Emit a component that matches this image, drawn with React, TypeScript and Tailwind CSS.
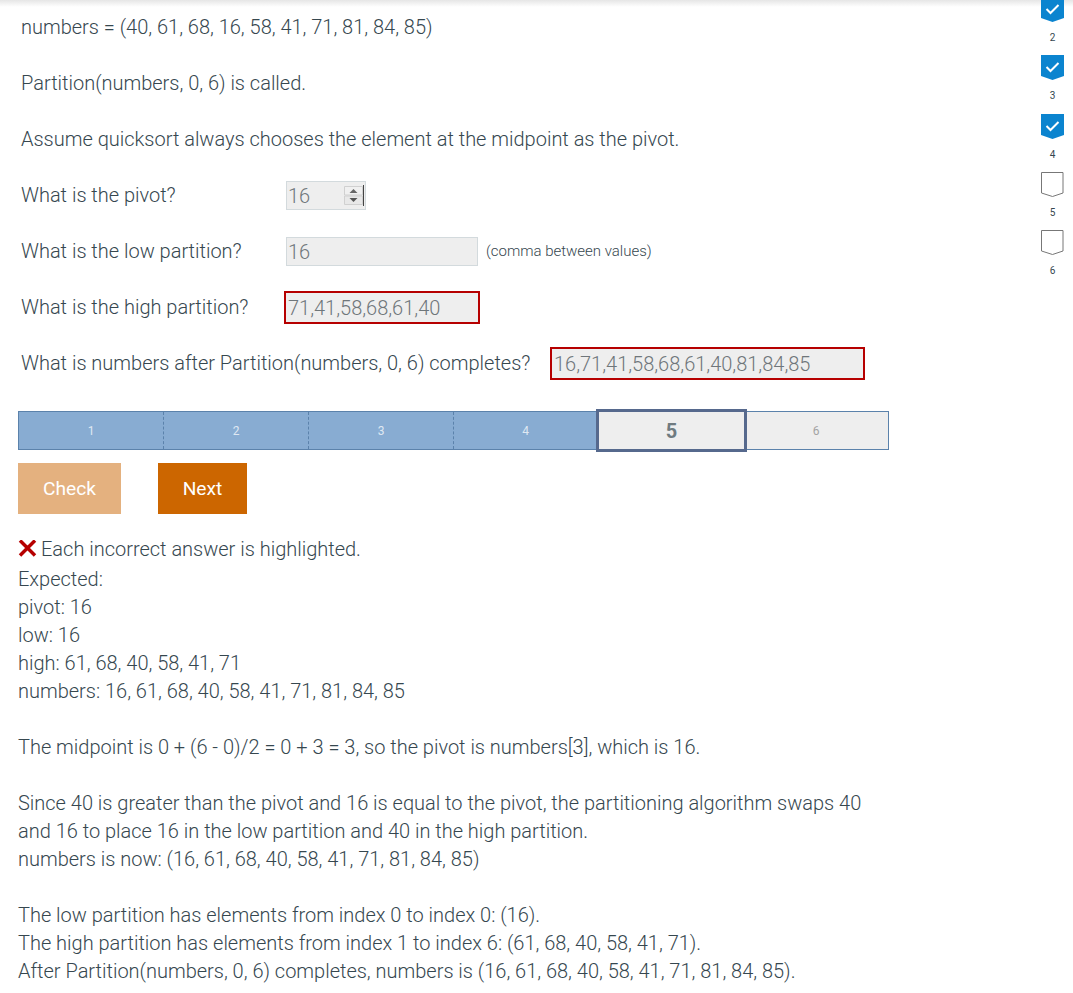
const labelClass = "shrink-0";

function Bookmark({ checked, n }: { checked: boolean; n: number }) {
  return (
    <div className="flex h-[58.25px] w-[23px] flex-col items-center">
      <svg width="23" height="26" viewBox="0 0 23 26" className="shrink-0">
        {checked ? (
          <>
            <path d="M0 0H23V21L11.5 25L0 21Z" fill="#0b84cf" />
            <path d="M5.5 12L9.5 16L17.5 8" fill="none" stroke="#fff" strokeWidth="2" />
          </>
        ) : (
          <path d="M0.5 0.5H22V21L11.5 24.5L0.5 21Z" fill="#fff" stroke="#777" strokeWidth="1" />
        )}
      </svg>
      <span className="mt-[8px] text-[10px] leading-[14px] font-normal text-[#36474f]">{n}</span>
    </div>
  );
}

function Field({ value, className }: { value: string; className: string }) {
  return (
    <input
      readOnly
      value={value}
      className={`box-border bg-[#eeeeee] text-[20px] font-light tracking-normal text-[#6f767a] outline-none ${className}`}
    />
  );
}

const steps = [1, 2, 3, 4];

export default function App() {
  return (
    <div className="relative flex h-[993px] w-[1073px] overflow-hidden bg-white font-['Roboto',sans-serif] text-[20px] leading-7 font-light tracking-[-0.01px] text-[#36474f]">
      <div className="absolute inset-x-0 top-0 h-[7px] bg-gradient-to-b from-[#e6e6e6] to-transparent" />

      <main className="w-[1041px] shrink-0 pt-[13px] pl-[18px]">
        <div className="flex flex-col gap-7 pl-[3px]">
          <p>numbers = (40, 61, 68, 16, 58, 41, 71, 81, 84, 85)</p>
          <p>Partition(numbers, 0, 6) is called.</p>
          <p>Assume quicksort always chooses the element at the midpoint as the pivot.</p>

          <div className="flex h-7 items-center">
            <span className={`${labelClass} w-[265px]`}>What is the pivot?</span>
            <div className="relative mt-[1px]">
              <Field value="16" className="block h-[29px] w-[80px] border border-[#d3dadd] pl-[1px]" />
              <div className="absolute top-[4px] left-[58px] h-[21px] w-[20px] border-r border-r-[#444]">
                <svg width="19" height="21" viewBox="0 0 19 21" className="block">
                  <path d="M0.5 1.5H18.5V10H0.5Z" fill="#f0f0f0" stroke="#d0d0d0" strokeWidth="1" />
                  <path d="M0.5 11H18.5V19.5H0.5Z" fill="#e8e8e8" stroke="#d0d0d0" strokeWidth="1" />
                  <path d="M5.5 8L9.5 4L13.5 8Z" fill="#666" />
                  <path d="M5.5 13L9.5 17L13.5 13Z" fill="#555" />
                </svg>
              </div>
            </div>
          </div>

          <div className="flex h-7 items-center">
            <span className={`${labelClass} w-[265px]`}>What is the low partition?</span>
            <Field value="16" className="mt-[1px] h-[29px] w-[192px] border border-[#d3dadd] pl-[1px]" />
            <span className="ml-2 text-[15px] font-light">(comma between values)</span>
          </div>

          <div className="flex h-7 items-center">
            <span className={`${labelClass} w-[263px]`}>What is the high partition?</span>
            <Field value="71,41,58,68,61,40" className="mt-[1px] h-[33px] w-[196px] border-2 border-[#b60000] pl-[2px]" />
          </div>

          <div className="flex h-7 items-center">
            <span className={`${labelClass} w-[529px]`}>What is numbers after Partition(numbers, 0, 6) completes?</span>
            <Field value="16,71,41,58,68,61,40,81,84,85" className="mt-[1px] h-[33px] w-[315px] border-2 border-[#b60000] pl-[2px]" />
          </div>
        </div>

        <div className="mt-[34px] flex h-[39px] w-[871px] items-stretch border border-[#5b82ab] bg-[#88acd2]">
          {steps.map((n) => (
            <div
              key={n}
              className={`flex items-center justify-center text-[12px] font-normal text-[#dfe8f2] ${n < 4 ? "w-[145px] border-r border-dashed border-r-[#5b82ab]" : "w-[143px]"}`}
            >
              {n}
            </div>
          ))}
          <div className="relative w-[291px] bg-[#eeeeee]">
            <div className="absolute top-[-3px] bottom-[-3px] left-[-1px] flex w-[151px] items-center justify-center border-[3px] border-[#56698d] bg-[#eeeeee] text-[20px] font-bold text-[#6f7b80]">
              5
            </div>
            <div className="absolute inset-y-0 right-[1px] flex w-[142px] items-center justify-center text-[12px] font-normal text-[#a3a3a3]">
              6
            </div>
          </div>
        </div>

        <div className="mt-[13px] flex gap-[37px]">
          <button type="button" className="h-[51px] w-[103px] bg-[#e4b17f] text-[19.2px] font-normal text-white">
            Check
          </button>
          <button type="button" className="h-[51px] w-[89px] bg-[#cc6600] text-[19.2px] font-normal text-white">
            Next
          </button>
        </div>

        <div className="mt-[21px] w-[860px]">
          <p className="mb-[2px] flex items-center">
            <svg width="19" height="18" viewBox="0 0 19 18" className="mr-[4px] shrink-0">
              <path d="M2 0.5L17 15.5M17 0.5L2 15.5" stroke="#b60000" strokeWidth="3.5" fill="none" />
            </svg>
            Each incorrect answer is highlighted.
          </p>
          <p>Expected:</p>
          <p>pivot: 16</p>
          <p>low: 16</p>
          <p>high: 61, 68, 40, 58, 41, 71</p>
          <p>numbers: 16, 61, 68, 40, 58, 41, 71, 81, 84, 85</p>
          <p className="mt-7">The midpoint is 0 + (6 - 0)/2 = 0 + 3 = 3, so the pivot is numbers[3], which is 16.</p>
          <p className="mt-7">
            Since 40 is greater than the pivot and 16 is equal to the pivot, the partitioning algorithm swaps 40 and 16 to place 16 in the low partition and 40 in the high partition.
          </p>
          <p>numbers is now: (16, 61, 68, 40, 58, 41, 71, 81, 84, 85)</p>
          <p className="mt-7">The low partition has elements from index 0 to index 0: (16).</p>
          <p>The high partition has elements from index 1 to index 6: (61, 68, 40, 58, 41, 71).</p>
          <p>After Partition(numbers, 0, 6) completes, numbers is (16, 61, 68, 40, 58, 41, 71, 81, 84, 85).</p>
        </div>
      </main>

      <aside className="relative mt-[-3px] flex flex-col">
        <Bookmark checked n={2} />
        <Bookmark checked n={3} />
        <Bookmark checked n={4} />
        <Bookmark checked={false} n={5} />
        <Bookmark checked={false} n={6} />
      </aside>
    </div>
  );
}
